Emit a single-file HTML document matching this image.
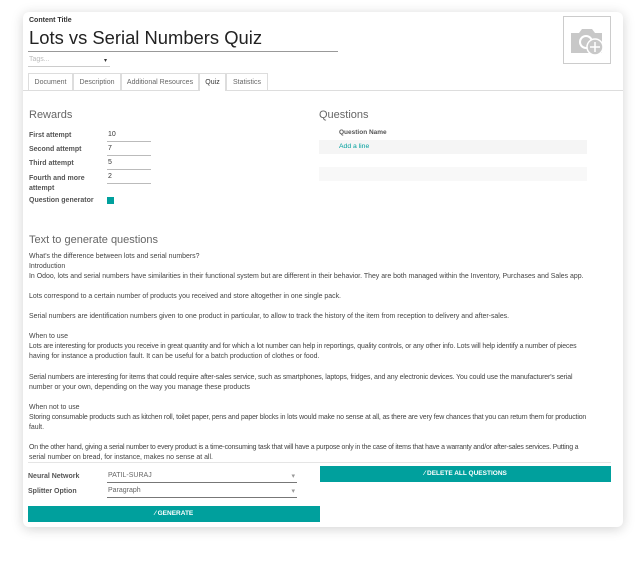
<!DOCTYPE html>
<html><head><meta charset="utf-8"><style>
*{box-sizing:border-box;margin:0;padding:0}
body{width:640px;height:565px;background:#fff;font-family:"Liberation Sans",sans-serif;color:#4c4c4c;position:relative;overflow:hidden}
.card{position:absolute;left:23px;top:12px;width:600px;height:515px;background:#fff;border-radius:6px;box-shadow:0 2px 12px rgba(0,0,0,.18)}
.a{position:absolute;white-space:nowrap}
.lbl{font-size:7px;font-weight:bold;color:#555}
.inp{position:absolute;border-bottom:1px solid #bbb;font-size:7px;color:#333;padding-left:1px}
.tab{position:absolute;top:73px;height:17px;border:1px solid #ddd;border-bottom:none;font-size:7px;color:#666;text-align:center;line-height:17px}
.txt{position:absolute;left:29px;font-size:6.95px;color:#444;line-height:10.05px;white-space:nowrap}
.btn{position:absolute;background:#00a09d;color:#fff;font-size:6.5px;font-weight:bold;text-align:center;line-height:16px;height:16px}
</style></head><body>
<div class="card"></div>
<div class="a lbl" style="left:29px;top:17px;color:#333">Content Title</div>
<div class="a" style="left:29px;top:27px;font-size:18.4px;color:#222">Lots vs Serial Numbers Quiz</div>
<div class="a" style="left:28px;top:51px;width:310px;height:1px;background:#999"></div>
<div class="a" style="left:29px;top:56px;font-size:7px;color:#bbb">Tags...</div>
<div class="a" style="left:104px;top:57px;font-size:6px;color:#333">▾</div>
<div class="a" style="left:28px;top:66px;width:82px;height:1px;background:#ccc"></div>
<div class="a" style="left:563px;top:16px;width:48px;height:48px;border:1px solid #ccc"></div>
<svg class="a" style="left:569px;top:24px" width="36" height="34" viewBox="0 0 36 34"><path d="M2 9h8l3-4h10l3 4h7v20H2z" fill="#c8c8c8"/><circle cx="17" cy="18" r="7" fill="#fff"/><circle cx="17" cy="18" r="5" fill="#c8c8c8"/><circle cx="26" cy="23" r="8" fill="#c8c8c8" stroke="#fff" stroke-width="1.5"/><path d="M26 18v10M21 23h10" stroke="#fff" stroke-width="1.5"/></svg>
<div class="a" style="left:23px;top:90px;width:600px;height:1px;background:#ddd"></div>
<div class="tab" style="left:28px;width:45px">Document</div>
<div class="tab" style="left:73px;width:48px">Description</div>
<div class="tab" style="left:121px;width:78px">Additional Resources</div>
<div class="tab" style="left:199px;width:27px;color:#333;background:#fff;height:18px">Quiz</div>
<div class="tab" style="left:226px;width:42px">Statistics</div>
<div class="a" style="left:29px;top:109px;font-size:11px;color:#666">Rewards</div>
<div class="a lbl" style="left:29px;top:132px">First attempt</div>
<div class="inp" style="left:107px;top:131px;width:44px;height:11px">10</div>
<div class="a lbl" style="left:29px;top:146px">Second attempt</div>
<div class="inp" style="left:107px;top:145px;width:44px;height:11px">7</div>
<div class="a lbl" style="left:29px;top:160px">Third attempt</div>
<div class="inp" style="left:107px;top:159px;width:44px;height:11px">5</div>
<div class="a lbl" style="left:29px;top:174px;line-height:10px">Fourth and more<br>attempt</div>
<div class="inp" style="left:107px;top:173px;width:44px;height:11px">2</div>
<div class="a lbl" style="left:29px;top:197px">Question generator</div>
<div class="a" style="left:107px;top:197px;width:7px;height:7px;background:#00a09d"></div>
<div class="a" style="left:319px;top:109px;font-size:11px;color:#666">Questions</div>
<div class="a lbl" style="left:339px;top:129px;font-size:6.5px">Question Name</div>
<div class="a" style="left:319px;top:140px;width:268px;height:14px;background:#f5f5f5"></div>
<div class="a" style="left:339px;top:143px;font-size:6.8px;color:#00a09d">Add a line</div>
<div class="a" style="left:319px;top:167px;width:268px;height:14px;background:#f8f8f8"></div>
<div class="a" style="left:29px;top:234px;font-size:11px;color:#666">Text to generate questions</div>
<div class="txt" style="top:252px">What's the difference between lots and serial numbers?<br>Introduction<br>In Odoo, lots and serial numbers have similarities in their functional system but are different in their behavior. They are both managed within the Inventory, Purchases and Sales app.<br>&nbsp;<br>Lots correspond to a certain number of products you received and store altogether in one single pack.<br>&nbsp;<br>Serial numbers are identification numbers given to one product in particular, to allow to track the history of the item from reception to delivery and after-sales.<br>&nbsp;<br>When to use<br><span style="letter-spacing:-0.12px">Lots are interesting for products you receive in great quantity and for which a lot number can help in reportings, quality controls, or any other info. Lots will help identify a number of pieces</span><br>having for instance a production fault. It can be useful for a batch production of clothes or food.<br>&nbsp;<br><span style="letter-spacing:-0.12px">Serial numbers are interesting for items that could require after-sales service, such as smartphones, laptops, fridges, and any electronic devices. You could use the manufacturer's serial</span><br>number or your own, depending on the way you manage these products<br>&nbsp;<br>When not to use<br><span style="letter-spacing:-0.15px">Storing consumable products such as kitchen roll, toilet paper, pens and paper blocks in lots would make no sense at all, as there are very few chances that you can return them for production</span><br>fault.<br>&nbsp;<br><span style="letter-spacing:-0.2px">On the other hand, giving a serial number to every product is a time-consuming task that will have a purpose only in the case of items that have a warranty and/or after-sales services. Putting a</span><br>serial number on bread, for instance, makes no sense at all.</div>
<div class="a" style="left:28px;top:462px;width:583px;height:1px;background:#e5e5e5"></div>
<div class="a lbl" style="left:28px;top:473px">Neural Network</div>
<div class="inp" style="left:107px;top:472px;width:190px;height:11px;border-bottom:1px solid #777;color:#666">PATIL-SURAJ<span style="position:absolute;right:2px;color:#999">▾</span></div>
<div class="a lbl" style="left:28px;top:488px">Splitter Option</div>
<div class="inp" style="left:107px;top:487px;width:190px;height:11px;border-bottom:1px solid #777;color:#666">Paragraph<span style="position:absolute;right:2px;color:#999">▾</span></div>
<div class="btn" style="left:320px;top:466px;width:291px">⁄ DELETE ALL QUESTIONS</div>
<div class="btn" style="left:28px;top:506px;width:292px">⁄ GENERATE</div>
</body></html>
